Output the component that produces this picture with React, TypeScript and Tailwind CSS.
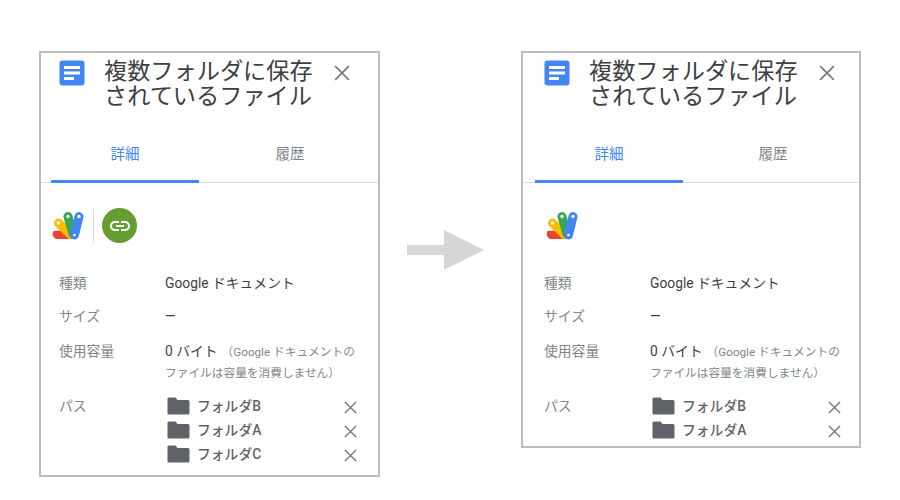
import React from 'react';

const font = '[font-family:Roboto,"Noto_Sans_CJK_JP",sans-serif]';

const DocIcon = () => (
  <svg width="26" height="26" viewBox="0 0 26 26">
    <rect x="0.5" y="0.5" width="25" height="25" rx="3" fill="#4285f4" />
    <rect x="5" y="6" width="16" height="3" fill="#fff" />
    <rect x="5" y="11.5" width="16" height="3" fill="#fff" />
    <rect x="5" y="17" width="10" height="3" fill="#fff" />
  </svg>
);

const AppsScriptIcon = () => (
  <svg width="32" height="30" viewBox="0 0 32 30" fill="none" strokeLinecap="round">
    <path d="M1.500 20 L17 19 L25 28 L4 28 Q1.500 27 0.500 23 Z" fill="#ea4335" />
    <path d="M6.500 12 L19 24" stroke="#fbbc04" strokeWidth="9" />
    <path d="M16 5.500 L21 23" stroke="#34a853" strokeWidth="9" />
    <path d="M27 5.500 L22.500 24" stroke="#4285f4" strokeWidth="9" />
    <circle cx="6.500" cy="12" r="1.700" fill="#fff" />
    <circle cx="16" cy="5.500" r="1.700" fill="#fff" />
    <circle cx="27" cy="5.500" r="1.700" fill="#fff" />
    <circle cx="22.500" cy="24" r="1.300" fill="#fff" />
  </svg>
);

const LinkBadge = () => (
  <div className="flex h-[35px] w-[35px] items-center justify-center rounded-full bg-[#659d32]">
    <svg width="24" height="24" viewBox="0 0 24 24" fill="#fff">
      <path d="M3.900 12c0-1.710 1.390-3.100 3.100-3.100h4V7H7c-2.760 0-5 2.240-5 5s2.240 5 5 5h4v-1.900H7c-1.710 0-3.100-1.390-3.100-3.100zM8 13h8v-2H8v2zm9-6h-4v1.900h4c1.710 0 3.100 1.390 3.100 3.100s-1.390 3.100-3.100 3.100h-4V17h4c2.760 0 5-2.240 5-5s-2.240-5-5-5z" />
    </svg>
  </div>
);

const FolderIcon = () => (
  <svg width="23" height="18" viewBox="0 0 23 18" className="shrink-0">
    <path d="M2 0.500 H8.500 L10.500 3 H21 Q22.500 3 22.500 4.500 V16 Q22.500 17.500 21 17.500 H2 Q0.500 17.500 0.500 16 V2 Q0.500 0.500 2 0.500 Z" fill="#5f6368" />
  </svg>
);

const CloseIcon = ({ size, color }: { size: number; color: string }) => (
  <svg width={size} height={size} viewBox="0 0 14 14" fill="none" stroke={color} strokeWidth="1.400">
    <path d="M1 1 L13 13 M13 1 L1 13" />
  </svg>
);

const PathRow = ({ name }: { name: string }) => (
  <div className="flex h-6 items-center">
    <div className="ml-[2px] flex w-[30px] shrink-0">
      <FolderIcon />
    </div>
    <span className="flex-1 text-[13.800px] font-medium text-[#5f6368]">{name}</span>
    <div className="mt-[2px]">
      <CloseIcon size={13} color="#757575" />
    </div>
  </div>
);

interface PanelProps {
  inset: string;
  detailsPad: string;
  tabsInset: string;
  secondTab: string;
  ownerInset: string;
  height: string;
  width: string;
  showLink: boolean;
  folders: string[];
}

const Panel = ({ inset, detailsPad, tabsInset, secondTab, ownerInset, height, width, showLink, folders }: PanelProps) => (
  <div className={`${width} ${height} shrink-0 overflow-hidden border-2 border-[#bdbdbd] bg-white`}>
    {/* Title */}
    <div className={`${inset} flex pt-[6px]`}>
      <div className="mt-[1px] w-[45px] shrink-0">
        <DocIcon />
      </div>
      <div className="w-[230px] shrink-0 text-[23.200px] leading-[25px] text-[#3c4043]">
        複数フォルダに保存
        <br />
        されているファイル
      </div>
      <div className="mt-[6px]">
        <CloseIcon size={16} color="#757575" />
      </div>
    </div>

    {/* Tabs */}
    <div className="mt-[10px] border-b border-[#dadce0]">
      <div className={`${tabsInset} -mb-px flex h-[64px] text-[14.500px]`}>
        <div className="flex w-[148px] shrink-0 items-center justify-center border-b-[3px] border-[#4285f4] pt-[11px] text-[#4285f4]">詳細</div>
        <div className={`${secondTab} flex shrink-0 items-center justify-center border-b-[3px] border-transparent pt-[11px] text-[#80868b]`}>履歴</div>
      </div>
    </div>

    {/* Owners */}
    <div className={`${ownerInset} mt-[24px] flex h-[37px] items-center`}>
      <AppsScriptIcon />
      {showLink && (
        <>
          <div className="mr-[8px] ml-[9px] h-[34px] w-[1px] bg-[#dadce0]" />
          <LinkBadge />
        </>
      )}
    </div>

    {/* Details */}
    <div className={`${detailsPad} mt-[23px] text-[13.800px]`}>
      <div className="flex h-[33px] items-center">
        <div className="w-[106px] shrink-0 text-[#80868b]">種類</div>
        <div className="text-[#3c4043]">Google ドキュメント</div>
      </div>
      <div className="flex h-[33px] items-center">
        <div className="w-[106px] shrink-0 text-[#80868b]">サイズ</div>
        <div className="text-[#3c4043]">—</div>
      </div>
      <div className="mt-[8px] flex">
        <div className="w-[106px] shrink-0 text-[#80868b]">使用容量</div>
        <div className="text-[#3c4043]">
          <div className="whitespace-nowrap">
            0 バイト
            <span className="ml-1 text-[11.700px] text-[#80868b]">（Google ドキュメントの</span>
          </div>
          <div className="mt-[3px] whitespace-nowrap text-[11.700px] text-[#80868b]">ファイルは容量を消費しません）</div>
        </div>
      </div>
      <div className="mt-[12px] flex">
        <div className="w-[106px] shrink-0 pt-[2px] text-[#80868b]">パス</div>
        <div className="flex-1">
          {folders.map((name) => (
            <PathRow key={name} name={name} />
          ))}
        </div>
      </div>
    </div>
  </div>
);

const Arrow = () => (
  <svg width="77" height="40" viewBox="0 0 77 40" className="mt-[179px] shrink-0">
    <path d="M0 15 H37 V0 L77 20 L37 40 V25 H0 Z" fill="#d6d6d6" />
  </svg>
);

export default function App() {
  return (
    <div className={`${font} flex h-[500px] w-[900px] items-start overflow-hidden bg-white pt-[51px] pl-[39px]`}>
      <Panel
        inset="pl-[18px]"
        detailsPad="pl-[18px] pr-[21px]"
        tabsInset="ml-[10px]"
        secondTab="w-[182px]"
        ownerInset="ml-[11px]"
        width="w-[341px]"
        height="h-[426px]"
        showLink
        folders={['フォルダB', 'フォルダA', 'フォルダC']}
      />
      <div className="mr-[37px] ml-[27px] flex">
        <Arrow />
      </div>
      <Panel
        inset="pl-[21px]"
        detailsPad="pl-[21px] pr-[18px]"
        tabsInset="ml-[12px]"
        secondTab="w-[180px]"
        ownerInset="ml-[23px]"
        width="w-[340px]"
        height="h-[397px]"
        showLink={false}
        folders={['フォルダB', 'フォルダA']}
      />
    </div>
  );
}
